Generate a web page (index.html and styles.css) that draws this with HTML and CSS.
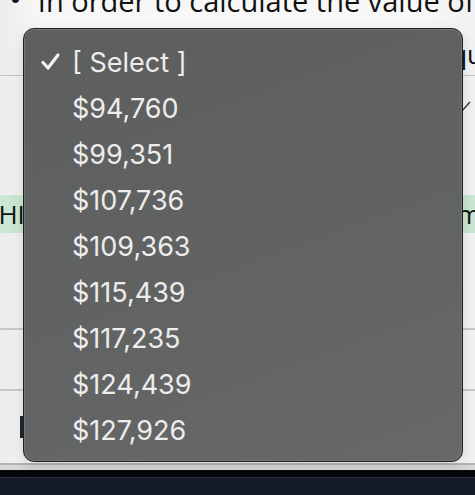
FILE: index.html
```html
<!DOCTYPE html>
<html>
<head>
<meta charset="utf-8">
<link rel="stylesheet" href="styles.css">
</head>
<body>
<div class="page">
  <div class="intro"><span class="bullet">•</span><span class="intro-text">In order to calculate the value of</span></div>
  <div class="row row-head"><span class="right-text">qu</span></div>
  <div class="row row-select">
    <svg class="chev" width="12" height="14" viewBox="0 0 12 14"><path d="M1 12 L10 2" stroke="#333" stroke-width="1.3" fill="none"/></svg>
  </div>
  <div class="row row-gap"></div>
  <div class="row row-green"><span class="left-text">CHI</span><span class="right-text">m</span></div>
  <div class="row row-a"></div>
  <div class="row row-b"></div>
  <div class="row row-c"><span class="marker"></span></div>
  <div class="row row-end"></div>
  <div class="footer"><div class="footer-top"></div></div>

  <div class="menu">
    <div class="item selected"><svg class="check" width="22" height="20" viewBox="0 0 22 20"><path d="M3 10.5 L8 16 L18 3" stroke="#f2f2f2" stroke-width="3.2" fill="none" stroke-linecap="round" stroke-linejoin="round"/></svg><span>[ Select ]</span></div>
    <div class="item"><span>$94,760</span></div>
    <div class="item"><span>$99,351</span></div>
    <div class="item"><span>$107,736</span></div>
    <div class="item"><span>$109,363</span></div>
    <div class="item"><span>$115,439</span></div>
    <div class="item"><span>$117,235</span></div>
    <div class="item"><span>$124,439</span></div>
    <div class="item"><span>$127,926</span></div>
  </div>
</div>
</body>
</html>
```
FILE: styles.css
```css
html, body {
  margin: 0;
  padding: 0;
}
body {
  width: 475px;
  height: 495px;
  overflow: hidden;
  background: #f3f3f3;
  font-family: "Liberation Sans", Arial, sans-serif;
}
.page {
  position: relative;
  width: 475px;
  height: 495px;
  display: flex;
  flex-direction: column;
  background: linear-gradient(90deg, #ececec 0px, #f7f7f7 40px, #f7f7f7 430px, #f1f1f1 475px);
}
.intro {
  height: 28px;
  display: flex;
  align-items: flex-end;
  gap: 16px;
  font-family: "Open Sans", sans-serif;
  font-size: 29px;
  color: #111;
  white-space: nowrap;
  overflow: hidden;
}
.intro .bullet {
  margin-left: 9px;
  font-size: 34px;
}
.intro-text,
.intro .bullet {
  position: relative;
  top: -8px;
}
.intro .bullet {
  top: -6px;
}
.row {
  position: relative;
  flex: none;
  display: flex;
  align-items: center;
  justify-content: space-between;
  font-family: "Open Sans", sans-serif;
  font-size: 26px;
  color: #111;
  white-space: nowrap;
  overflow: hidden;
}
.row-head {
  height: 47px;
  border-bottom: 1px solid #c4c4c4;
  justify-content: flex-end;
}
.row-head .right-text {
  margin-right: -8px;
  margin-top: 4px;
}
.row-select {
  height: 64px;
  justify-content: flex-end;
  align-items: flex-start;
}
.chev {
  margin-top: 24px;
  margin-right: 3px;
}
.row-gap {
  height: 55px;
}
.row-green {
  height: 38px;
  background: #c9e7d3;
}
.row-green .left-text {
  margin-left: -18px;
}
.row-green .right-text {
  margin-right: -6px;
}
.row-a {
  height: 95px;
  border-bottom: 2px solid #c8c8c8;
}
.row-b {
  height: 59px;
  border-bottom: 2px solid #c8c8c8;
}
.row-c {
  height: 72px;
  align-items: flex-start;
  border-bottom: 2px solid #b4b4b4;
}
.marker {
  display: block;
  width: 3px;
  height: 22px;
  margin-left: 20px;
  margin-top: 25px;
  background: #202733;
}
.row-end {
  height: 5px;
  background: #d6d6d6;
}
.footer {
  flex: 1;
  background: #161c27;
}
.footer-top {
  height: 7px;
  background: #05070a;
  border-bottom: 1px solid #2b323d;
}
.menu {
  position: absolute;
  left: 23px;
  top: 28px;
  width: 440px;
  height: 434px;
  border: 1px solid #1f1f1f;
  border-radius: 11px;
  box-shadow: inset 0 0 0 1px #757776, 0 4px 14px rgba(0,0,0,0.12);
  background: linear-gradient(160deg, #5c5f5e 0%, #606362 50%, #686868 100%);
  padding: 10px 0 9px;
  box-sizing: border-box;
  display: flex;
  flex-direction: column;
}
.item {
  flex: none;
  height: 46px;
  display: flex;
  align-items: center;
  padding-left: 48px;
  position: relative;
  font-family: Inter, "Liberation Sans", sans-serif;
  font-size: 27px;
  color: #ededed;
  letter-spacing: 0;
}
.check {
  position: absolute;
  left: 16px;
  top: 13px;
}
```
